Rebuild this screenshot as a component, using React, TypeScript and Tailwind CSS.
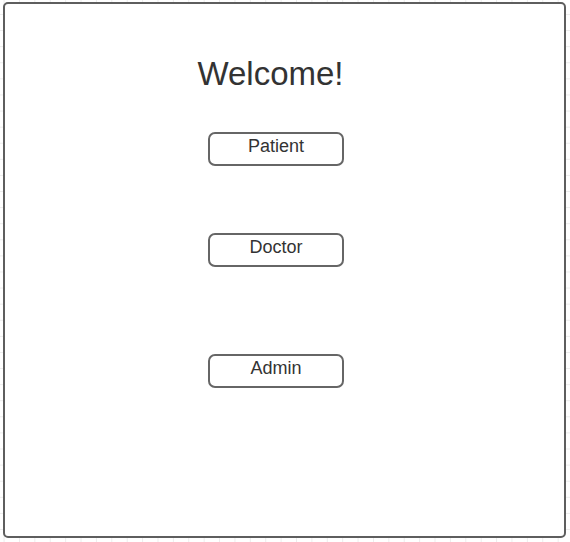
const roles = [
  { label: "Patient", gap: "mt-[42px]" },
  { label: "Doctor", gap: "mt-[67px]" },
  { label: "Admin", gap: "mt-[87px]" },
];

export default function App() {
  return (
    <div className="w-[570px] h-[542px] pl-[3px] pt-[2px] bg-white bg-[linear-gradient(to_right,#ececec_1px,transparent_1px),linear-gradient(to_bottom,#ececec_1px,transparent_1px)] bg-[size:15.4px_16.1px] bg-[position:3.6px_14px] font-['Liberation_Sans',Arial,sans-serif] text-[#333333]">
      <div className="w-[563px] h-[536px] border-2 border-[#5e5e5e] rounded-[5px] bg-white flex flex-col">
        <div className="w-[531px] mt-[53px] flex justify-center">
          <h1 className="text-[33px] leading-none">Welcome!</h1>
        </div>

        {roles.map((r) => (
          <button
            key={r.label}
            className={`${r.gap} ml-[203px] w-[136px] h-[34px] border-2 border-[#666666] rounded-[7px] bg-white pt-[2px] flex justify-center items-start text-[18px] leading-[20px] text-[#333333]`}
          >
            {r.label}
          </button>
        ))}
      </div>
    </div>
  );
}
